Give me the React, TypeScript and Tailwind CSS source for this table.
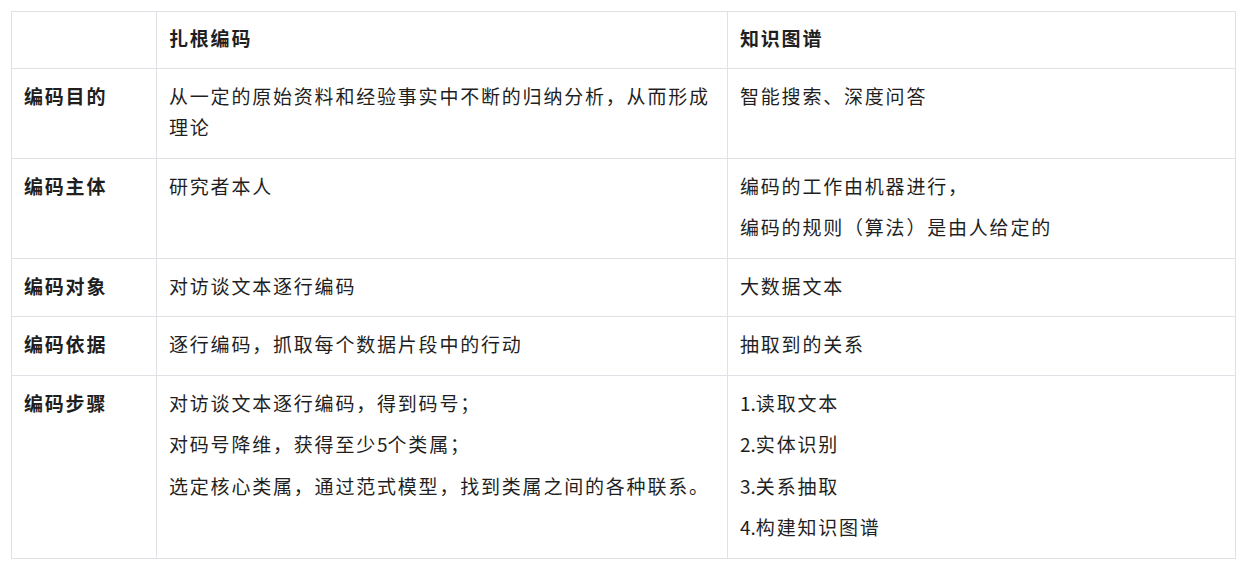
const font = {
  fontFamily: '"Noto Sans CJK SC", "Noto Sans", sans-serif',
};

type Row = {
  label: string;
  grounded: string[];
  graph: string[];
};

const rows: Row[] = [
  {
    label: "编码目的",
    grounded: ["从一定的原始资料和经验事实中不断的归纳分析，从而形成理论"],
    graph: ["智能搜索、深度问答"],
  },
  {
    label: "编码主体",
    grounded: ["研究者本人"],
    graph: ["编码的工作由机器进行，", "编码的规则（算法）是由人给定的"],
  },
  {
    label: "编码对象",
    grounded: ["对访谈文本逐行编码"],
    graph: ["大数据文本"],
  },
  {
    label: "编码依据",
    grounded: ["逐行编码，抓取每个数据片段中的行动"],
    graph: ["抽取到的关系"],
  },
  {
    label: "编码步骤",
    grounded: [
      "对访谈文本逐行编码，得到码号；",
      "对码号降维，获得至少5个类属；",
      "选定核心类属，通过范式模型，找到类属之间的各种联系。",
    ],
    graph: ["1.读取文本", "2.实体识别", "3.关系抽取", "4.构建知识图谱"],
  },
];

// digits in the source are set without the wide tracking of the hanzi
function Line({ text }: { text: string }) {
  const parts = text.split(/(\d+\.?)/).filter(Boolean);
  return (
    <p>
      {parts.map((p, i) =>
        /\d/.test(p) ? (
          <span key={i} className="tracking-normal">
            {p}
          </span>
        ) : (
          <span key={i}>{p}</span>
        ),
      )}
    </p>
  );
}

function Cell({
  lines,
  bold = false,
  head = false,
}: {
  lines: string[];
  bold?: boolean;
  head?: boolean;
}) {
  return (
    <td
      className={
        "border border-[#dfe1e6] px-[12px] align-top text-[19px] leading-[31.5px] tracking-[1.8px] text-[#1f1f1f] " +
        (head ? "pt-[10px] pb-[14px] " : "pt-[11px] pb-[15px] ") +
        (bold ? "font-bold" : "font-normal")
      }
    >
      <div className="flex flex-col gap-[10px]">
        {lines.map((l, i) => (
          <Line key={i} text={l} />
        ))}
      </div>
    </td>
  );
}

export default function App() {
  return (
    <div className="min-h-screen bg-white p-[11px]" style={font}>
      <table className="w-[1224px] table-fixed border-collapse">
        <colgroup>
          <col className="w-[145px]" />
          <col className="w-[571px]" />
          <col className="w-[508px]" />
        </colgroup>
        <thead>
          <tr>
            <Cell lines={[""]} head />
            <Cell lines={["扎根编码"]} bold head />
            <Cell lines={["知识图谱"]} bold head />
          </tr>
        </thead>
        <tbody>
          {rows.map((r) => (
            <tr key={r.label}>
              <Cell lines={[r.label]} bold />
              <Cell lines={r.grounded} />
              <Cell lines={r.graph} />
            </tr>
          ))}
        </tbody>
      </table>
    </div>
  );
}
